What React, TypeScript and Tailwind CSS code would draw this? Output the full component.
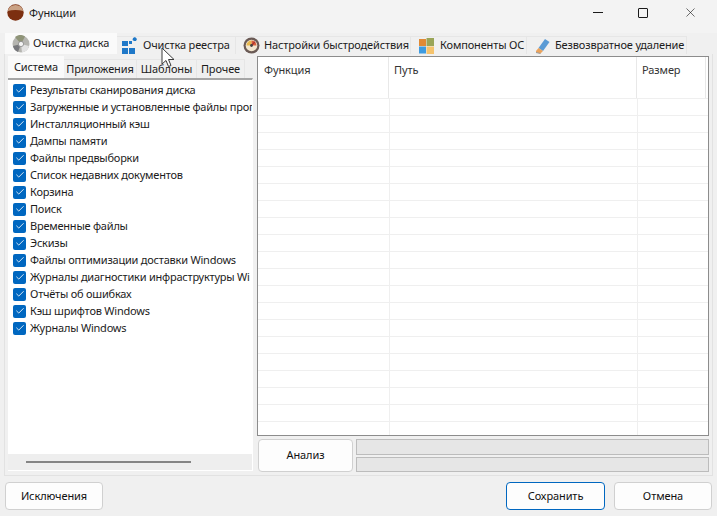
import { Check, X } from "lucide-react";

const ITEMS = [
  "Результаты сканирования диска",
  "Загруженные и установленные файлы прог",
  "Инсталляционный кэш",
  "Дампы памяти",
  "Файлы предвыборки",
  "Список недавних документов",
  "Корзина",
  "Поиск",
  "Временные файлы",
  "Эскизы",
  "Файлы оптимизации доставки Windows",
  "Журналы диагностики инфраструктуры Wi",
  "Отчёты об ошибках",
  "Кэш шрифтов Windows",
  "Журналы Windows",
];

const ROWS = Array.from({ length: 20 }, (_, i) => i);

function DiscIcon() {
  return (
    <svg width="18" height="18" viewBox="0 0 18 18">
      <circle cx="9" cy="9" r="8.5" fill="#b5b5b0" />
      <path d="M9 9 L3 2 A8.5 8.5 0 0 1 13 1.5Z" fill="#8f9478" />
      <path d="M9 9 L17 11 A8.5 8.5 0 0 1 10 17.5Z" fill="#e2e2e2" />
      <path d="M9 9 L1 11 A8.5 8.5 0 0 0 6 17Z" fill="#77787c" />
      <circle cx="9" cy="9" r="2.6" fill="#f4f4f4" stroke="#888" strokeWidth="0.8" />
    </svg>
  );
}

function RegistryIcon() {
  return (
    <svg width="15" height="17" viewBox="0 0 15 17" fill="#1f78c8">
      <rect x="0" y="4" width="6" height="5" />
      <rect x="0" y="11" width="6" height="6" />
      <rect x="7" y="11" width="6" height="6" />
      <rect x="7" y="4" width="3" height="3" />
      <path d="M11 1 L13 0 L15 2 L14 4 L12 4 L10.5 3Z" />
    </svg>
  );
}

function GaugeIcon() {
  return (
    <svg width="17" height="17" viewBox="0 0 17 17">
      <circle cx="8.5" cy="8.5" r="8" fill="#6a5a55" />
      <circle cx="8.5" cy="8.5" r="5.8" fill="#f2e6cf" />
      <path d="M3.5 8.5 A5 5 0 0 1 8.5 3.5 L8.5 8.5Z" fill="#e8b84c" />
      <path d="M8.5 3.5 A5 5 0 0 1 13.5 8.5 L8.5 8.5Z" fill="#d9603c" />
      <path d="M8 9 L12 4.8" stroke="#a33" strokeWidth="1.3" />
      <circle cx="8.5" cy="8.5" r="1.4" fill="#444" />
    </svg>
  );
}

function WindowsIcon() {
  return (
    <svg width="15" height="16" viewBox="0 0 15 16">
      <rect x="0" y="1" width="7" height="7" fill="#e08a35" />
      <rect x="7.5" y="0" width="7.5" height="8" fill="#9aa558" />
      <rect x="0" y="8.5" width="7" height="7" fill="#3e9be0" />
      <rect x="7.5" y="8.5" width="7.5" height="7.5" fill="#f5c36d" />
    </svg>
  );
}

function EraserIcon() {
  return (
    <svg width="15" height="16" viewBox="0 0 15 16">
      <path d="M10 1 L14.5 4 L8 13 L3.5 10Z" fill="#5b9bd5" />
      <path d="M3.5 10 L8 13 L5.5 15.5 L1 14.5 L1 13Z" fill="#eba35c" />
      <path d="M1 14.5 L5.5 15.5" stroke="#999" strokeWidth="1" />
    </svg>
  );
}

function AppIcon() {
  return (
    <svg width="17" height="17" viewBox="0 0 17 17">
      <circle cx="8.5" cy="8.5" r="8.2" fill="#7c2f10" />
      <path d="M0.6 7 A8.2 8.2 0 0 1 16.4 7 Q8.5 5 0.6 7Z" fill="#c9a184" />
    </svg>
  );
}

function Cursor() {
  return (
    <svg className="absolute left-[161px] top-[47px]" width="15" height="21" viewBox="0 0 15 21">
      <path d="M1 1 L1 17 L5 13.5 L7.5 19.5 L10 18.5 L7.5 12.5 L13 12.5Z" fill="#fff" stroke="#3a3a3a" strokeWidth="1" />
    </svg>
  );
}

function TopTab({ icon, label, className }: { icon: React.ReactNode; label: string; className: string }) {
  return (
    <div className={`flex h-[18px] items-center whitespace-nowrap border-t border-r border-[#e6e6e6] bg-[#f0f0f0] tracking-[-0.15px] ${className}`}>
      <span className="shrink-0">{icon}</span>
      <span>{label}</span>
    </div>
  );
}

function SubTab({ label, className }: { label: string; className: string }) {
  return (
    <div className={`flex h-[19px] items-center justify-center border-t border-r border-[#e6e6e6] ${className}`}>{label}</div>
  );
}

function Btn({ label, className }: { label: string; className: string }) {
  return (
    <div className={`flex items-center justify-center rounded-[4px] border bg-[#fdfdfd] text-[#111] ${className}`}>
      {label}
    </div>
  );
}

export default function App() {
  return (
    <div className="relative flex h-[516px] w-[717px] flex-col overflow-hidden bg-[#f0f0f0] font-['Noto_Sans','Open_Sans',sans-serif] text-[11px] tracking-[-0.1px] text-[#1c1c1c]">
      <div className="flex h-[33px] shrink-0 items-start bg-[#f3f3f3] pl-[7px] pt-[4px]">
        <AppIcon />
        <span className="ml-[5px] mt-[1px]">Функции</span>
        <div className="ml-auto flex items-center pt-[1px] text-[#1a1a1a]">
          <div className="mr-[35px] h-px w-[10px] bg-[#1a1a1a]" />
          <div className="mr-[35px] size-[10px] rounded-[1px] border border-[#1a1a1a]" />
          <X size={15} strokeWidth={1} className="mr-[19px]" />
        </div>
      </div>

      <div className="flex h-[21px] shrink-0 items-end pl-[5px]">
        <div className="flex h-[21px] w-[112px] items-center whitespace-nowrap bg-[#fafafa] pl-[7px]">
          <DiscIcon />
          <span className="ml-[3px]">Очистка диска</span>
        </div>
        <TopTab icon={<RegistryIcon />} label="Очистка реестра" className="w-[119px] gap-[6px] pl-[5px]" />
        <TopTab icon={<GaugeIcon />} label="Настройки быстродействия" className="w-[175px] gap-[4px] pl-[7px]" />
        <TopTab icon={<WindowsIcon />} label="Компоненты ОС" className="w-[116px] gap-[6px] pl-[8px]" />
        <TopTab icon={<EraserIcon />} label="Безвозвратное удаление" className="w-[160px] gap-[5px] pl-[8px]" />
      </div>

      <div className="mx-[4px] flex h-[422px] shrink-0 gap-[4px] border border-t-0 border-[#e2e2e2] bg-[#f0f0f0] pl-[3px] pr-[3px]">
        <div className="flex w-[245px] shrink-0 flex-col pt-[2px]">
          <div className="flex h-[22px] shrink-0 items-end">
            <div className="flex h-[22px] w-[56px] items-center justify-center bg-[#fafafa]">Система</div>
            <SubTab label="Приложения" className="w-[73px]" />
            <SubTab label="Шаблоны" className="w-[60px]" />
            <SubTab label="Прочее" className="w-[48px]" />
          </div>
          <div className="flex h-[393px] shrink-0 flex-col border-t-[2px] border-r border-b border-[#a6a6a6] border-r-white border-b-white bg-white">
            <div className="flex flex-1 flex-col pt-[2px] tracking-[-0.22px]">
              {ITEMS.map((item) => (
                <div key={item} className="flex h-[17px] shrink-0 items-center overflow-hidden whitespace-nowrap pl-[5px]">
                  <span className="-mt-[1px] flex size-[13px] shrink-0 items-center justify-center rounded-[2px] bg-[#0067c0] text-white">
                    <Check size={10} strokeWidth={2} />
                  </span>
                  <span className="ml-[4px]">{item}</span>
                </div>
              ))}
            </div>
            <div className="flex h-[16px] shrink-0 items-center bg-[#eeeeee] pl-[18px]">
              <div className="h-[2px] w-[165px] bg-[#858585]" />
            </div>
          </div>
        </div>

        <div className="flex min-w-0 flex-1 flex-col pt-[2px]">
          <div className="h-[380px] shrink-0 overflow-hidden border border-[#8c8c8c] bg-white">
            <div className="flex h-[41px] text-[#333]">
              <div className="w-[131px] border-r border-[#e8e8e8] pl-[6px] pt-[5px]">Функция</div>
              <div className="w-[248px] border-r border-[#e8e8e8] pl-[5px] pt-[5px]">Путь</div>
              <div className="w-[69px] border-r border-[#e8e8e8] pl-[5px] pt-[5px]">Размер</div>
            </div>
            {ROWS.map((r) => (
              <div key={r} className="flex h-[17px] border-t border-[#efefef]">
                <div className="w-[132px] border-r border-[#efefef]" />
                <div className="w-[248px] border-r border-[#efefef]" />
                <div className="flex-1" />
              </div>
            ))}
          </div>
          <div className="mt-[3px] flex gap-[3px] pl-[1px]">
            <Btn label="Анализ" className="h-[33px] w-[95px] shrink-0 border-[#d0d0d0]" />
            <div className="flex flex-1 flex-col gap-[2px]">
              <div className="h-[16px] border border-[#bcbcbc] bg-[#e6e6e6]" />
              <div className="h-[15px] border border-[#bcbcbc] bg-[#e6e6e6]" />
            </div>
          </div>
        </div>
      </div>

      <div className="flex flex-1 items-start px-[5px] pt-[6px]">
        <Btn label="Исключения" className="h-[28px] w-[98px] border-[#d0d0d0]" />
        <Btn label="Сохранить" className="ml-auto h-[28px] w-[99px] border-[#0067c0]" />
        <Btn label="Отмена" className="ml-[9px] h-[28px] w-[98px] border-[#d0d0d0]" />
      </div>

      <Cursor />
    </div>
  );
}
